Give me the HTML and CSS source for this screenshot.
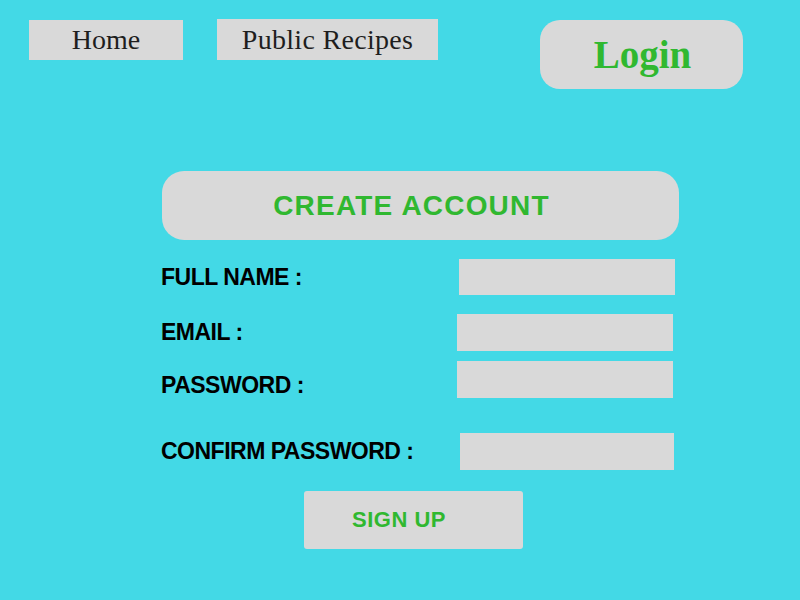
FILE: index.html
```html
<!DOCTYPE html>
<html>
<head>
<meta charset="utf-8">
<link rel="stylesheet" href="styles.css">
</head>
<body>
<header class="nav">
  <a class="nav-btn nav-home">Home</a>
  <a class="nav-btn nav-recipes">Public Recipes</a>
  <a class="login-btn">Login</a>
</header>
<main class="form">
  <div class="form-title">CREATE ACCOUNT</div>
  <div class="row row-name">
    <label class="label">FULL NAME :</label>
    <div class="field field-name"></div>
  </div>
  <div class="row row-email">
    <label class="label">EMAIL :</label>
    <div class="field field-email"></div>
  </div>
  <div class="row row-pass">
    <label class="label label-low">PASSWORD :</label>
    <div class="field field-pass"></div>
  </div>
  <div class="row row-confirm">
    <label class="label">CONFIRM PASSWORD :</label>
    <div class="field field-confirm"></div>
  </div>
  <div class="signup">SIGN UP</div>
</main>
</body>
</html>
```

FILE: styles.css
```css
html, body {
  margin: 0;
  padding: 0;
}
body {
  width: 800px;
  height: 600px;
  background: #43d9e6;
  overflow: hidden;
}
.nav {
  display: flex;
  align-items: flex-start;
  padding: 19px 0 0 29px;
}
.nav-btn {
  display: flex;
  align-items: center;
  justify-content: center;
  background: #d9d9d9;
  font-family: "Liberation Serif", serif;
  font-size: 28px;
  color: #1e1e1e;
}
.nav-home {
  width: 154px;
  height: 40px;
  margin-top: 1px;
}
.nav-recipes {
  width: 221px;
  height: 41px;
  margin-left: 34px;
  letter-spacing: 0.3px;
}
.login-btn {
  display: flex;
  align-items: center;
  justify-content: center;
  width: 203px;
  height: 69px;
  margin-left: 102px;
  margin-top: 1px;
  border-radius: 20px;
  background: #d9d9d9;
  font-family: "Liberation Serif", serif;
  font-weight: bold;
  font-size: 39px;
  color: #30b830;
  padding-left: 2px;
  box-sizing: border-box;
}
.form {
  margin: 82px 0 0 161px;
  width: 514px;
}
.form-title {
  display: flex;
  align-items: center;
  justify-content: center;
  box-sizing: border-box;
  width: 517px;
  height: 69px;
  margin-left: 1px;
  padding-right: 18px;
  border-radius: 22px;
  background: #d9d9d9;
  font-family: "Liberation Sans", Arial, sans-serif;
  font-weight: bold;
  font-size: 28px;
  letter-spacing: 1.2px;
  color: #30b830;
}
.row {
  display: flex;
  align-items: center;
  justify-content: space-between;
}
.row-name { margin-top: 19px; }
.row-email { margin-top: 19px; }
.row-pass { margin-top: 10px; }
.row-confirm { margin-top: 35px; }
.label {
  font-family: "Liberation Sans", Arial, sans-serif;
  font-weight: bold;
  font-size: 23px;
  letter-spacing: -0.5px;
  color: #000;
}
.label-low {
  margin-top: 6px;
  margin-bottom: -6px;
}
.field {
  width: 216px;
  height: 36px;
  background: #d9d9d9;
}
.field-email, .field-pass {
  height: 37px;
  margin-right: 2px;
}
.field-confirm {
  width: 214px;
  height: 37px;
  margin-right: 1px;
}
.signup {
  display: flex;
  align-items: center;
  box-sizing: border-box;
  width: 219px;
  height: 58px;
  margin: 21px 0 0 143px;
  padding-left: 48px;
  border-radius: 3px;
  background: #d9d9d9;
  font-family: "Liberation Sans", Arial, sans-serif;
  font-weight: bold;
  font-size: 22px;
  letter-spacing: 0.5px;
  color: #30b830;
}
```
